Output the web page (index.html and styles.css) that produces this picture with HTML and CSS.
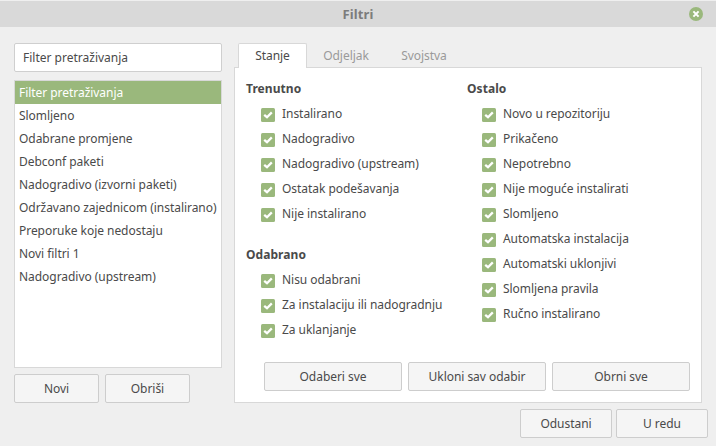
FILE: index.html
```html
<!DOCTYPE html>
<html lang="hr">
<head>
<meta charset="utf-8">
<title>Filtri</title>
<link rel="stylesheet" href="styles.css">
</head>
<body>
<svg class="defs" width="0" height="0"><symbol id="check" viewBox="0 0 14 14"><rect width="14" height="14" rx="1.5" fill="#9ab87c"/><path d="M3.2 6.8 6 9.2 10.8 4.4" fill="none" stroke="#fff" stroke-width="2.3"/></symbol></svg>
<div class="dialog">
  <header class="titlebar"><h1>Filtri</h1>
    <svg class="close" viewBox="0 0 14 14"><circle cx="7" cy="7" r="7" fill="#9ab87c"/><path d="M4.4 4.4 9.6 9.6M9.6 4.4 4.4 9.6" stroke="#fff" stroke-width="2"/></svg>
  </header>
  <main class="content">
    <aside class="sidebar">
      <div class="entry">Filter pretraživanja</div>
      <ul class="filters">
        <li class="selected">Filter pretraživanja</li>
        <li>Slomljeno</li>
        <li>Odabrane promjene</li>
        <li>Debconf paketi</li>
        <li>Nadogradivo (izvorni paketi)</li>
        <li>Održavano zajednicom (instalirano)</li>
        <li>Preporuke koje nedostaju</li>
        <li>Novi filtri 1</li>
        <li>Nadogradivo (upstream)</li>
      </ul>
      <div class="row"><button>Novi</button><button>Obriši</button></div>
    </aside>
    <section class="notebook">
      <nav class="tabs"><span class="tab active">Stanje</span><span class="tab">Odjeljak</span><span class="tab">Svojstva</span></nav>
      <div class="panel">
        <div class="columns">
          <div class="column">
            <h2>Trenutno</h2>
            <div class="group">
              <label><svg><use href="#check"/></svg><span>Instalirano</span></label>
              <label><svg><use href="#check"/></svg><span>Nadogradivo</span></label>
              <label><svg><use href="#check"/></svg><span>Nadogradivo (upstream)</span></label>
              <label><svg><use href="#check"/></svg><span>Ostatak podešavanja</span></label>
              <label><svg><use href="#check"/></svg><span>Nije instalirano</span></label>
            </div>
            <h2 class="second">Odabrano</h2>
            <div class="group">
              <label><svg><use href="#check"/></svg><span>Nisu odabrani</span></label>
              <label><svg><use href="#check"/></svg><span>Za instalaciju ili nadogradnju</span></label>
              <label><svg><use href="#check"/></svg><span>Za uklanjanje</span></label>
            </div>
          </div>
          <div class="column">
            <h2>Ostalo</h2>
            <div class="group">
              <label><svg><use href="#check"/></svg><span>Novo u repozitoriju</span></label>
              <label><svg><use href="#check"/></svg><span>Prikačeno</span></label>
              <label><svg><use href="#check"/></svg><span>Nepotrebno</span></label>
              <label><svg><use href="#check"/></svg><span>Nije moguće instalirati</span></label>
              <label><svg><use href="#check"/></svg><span>Slomljeno</span></label>
              <label><svg><use href="#check"/></svg><span>Automatska instalacija</span></label>
              <label><svg><use href="#check"/></svg><span>Automatski uklonjivi</span></label>
              <label><svg><use href="#check"/></svg><span>Slomljena pravila</span></label>
              <label><svg><use href="#check"/></svg><span>Ručno instalirano</span></label>
            </div>
          </div>
        </div>
        <div class="row wide"><button>Odaberi sve</button><button>Ukloni sav odabir</button><button>Obrni sve</button></div>
      </div>
    </section>
  </main>
  <footer class="actions"><button>Odustani</button><button>U redu</button></footer>
</div>
</body>
</html>
```
FILE: styles.css
```css
* { box-sizing: border-box; }
body {
  margin: 0;
  background: #efefef;
  color: #4a4a4a;
  font: 12px/17px "Noto Sans", sans-serif;
  letter-spacing: -0.045px;
}
.defs { display: block; }
.dialog { height: 446px; overflow: hidden; }
.titlebar {
  display: grid;
  grid-template-columns: 30px 1fr 30px;
  align-items: center;
  height: 27px;
  border-top: 1px solid #efefef;
  background: #d9d9d9;
}
.titlebar h1 {
  grid-column: 2;
  margin: 0;
  color: #7c7c7c;
  font-size: 13px;
  line-height: 18px;
  letter-spacing: 0.1px;
  text-align: center;
}
.close { width: 14px; height: 14px; margin-left: 3px; margin-top: -1px; }
.content {
  display: flex;
  gap: 12px;
  height: 376px;
  padding: 16px 14px 0;
}
.sidebar { width: 208px; flex: none; }
.entry {
  height: 29px;
  padding: 5px 8px;
  border: 1px solid #cfcfcf;
  border-radius: 2px;
  background: #fff;
  letter-spacing: 0;
}
.filters {
  height: 288px;
  margin: 8px 0 6px;
  padding: 0;
  border: 1px solid #d8d8d8;
  background: #fff;
  list-style: none;
}
.filters li {
  height: 23px;
  padding: 3px 4px;
  white-space: nowrap;
}
.filters .selected { background: #9ab87c; color: #fff; }
.row { display: flex; gap: 6px; }
button {
  width: 85px;
  height: 29px;
  padding: 0;
  border: 1px solid #cdcdcd;
  border-radius: 2px;
  background: #f5f5f5;
  color: inherit;
  font: inherit;
  letter-spacing: inherit;
}
.notebook { width: 468px; }
.tabs { display: flex; height: 24px; padding-left: 4px; }
.tab {
  width: 78px;
  height: 24px;
  padding-top: 4px;
  color: #9a9a9a;
  text-align: center;
}
.tab.active {
  z-index: 1;
  width: 69px;
  height: 25px;
  border: 1px solid #d8d8d8;
  border-bottom: 0;
  border-radius: 2px 2px 0 0;
  background: #fff;
  color: #4a4a4a;
  padding-top: 3px;
}
.panel {
  height: 336px;
  padding: 12px 11px 0;
  border: 1px solid #d8d8d8;
  background: #fff;
}
.columns { display: grid; grid-template-columns: 221px 1fr; height: 282px; }
h2 { margin: 0 0 9px; font-size: 12px; line-height: 17px; letter-spacing: 0.06px; }
.second { margin-top: 15px; }
.group { padding-left: 15px; }
label { display: flex; align-items: flex-start; gap: 7px; height: 25px; }
label svg { width: 14px; height: 14px; margin-top: 2px; flex: none; }
label span { margin-top: -1px; white-space: nowrap; }
.wide { padding-left: 18px; }
.wide button { width: 138px; flex: none; }
.actions { display: flex; justify-content: flex-end; gap: 4px; padding: 6px 8px 0; }
.actions button { width: 92px; }
```
